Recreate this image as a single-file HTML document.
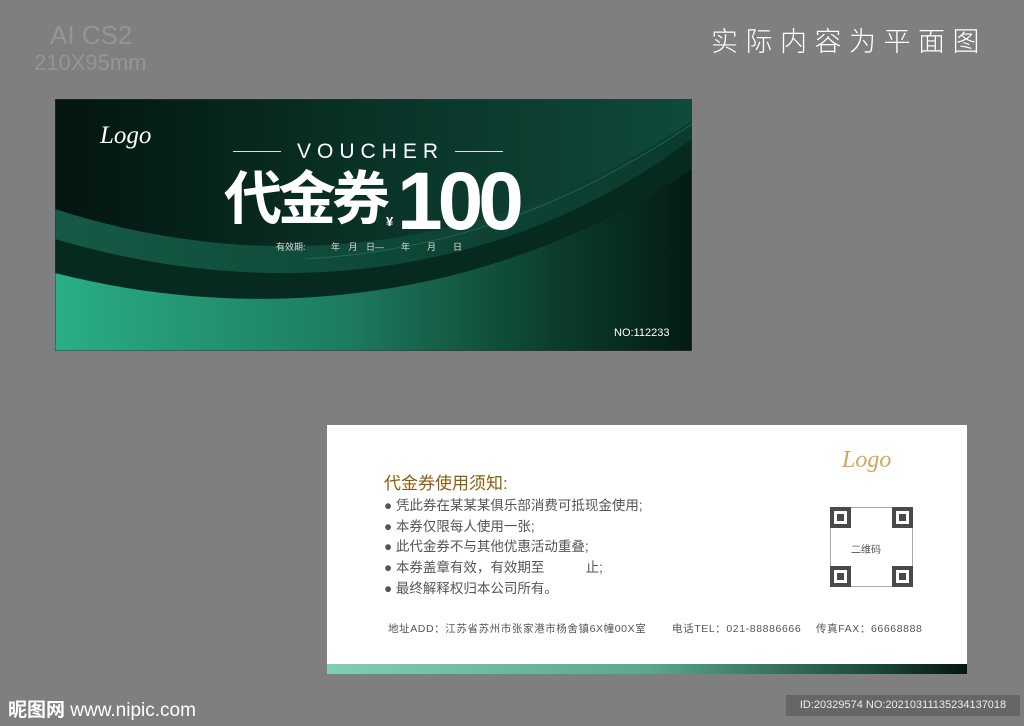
<!DOCTYPE html>
<html><head><meta charset="utf-8"><style>
*{margin:0;padding:0;box-sizing:border-box}
body{width:1024px;height:726px;background:#7f7f7f;position:relative;overflow:hidden;font-family:"Liberation Sans","Noto Sans CJK SC",sans-serif}
.abs{position:absolute;white-space:nowrap}
.qc{position:absolute;width:21px;height:21px;background:#4a4a4a;padding:4px}
.qc div{width:13px;height:13px;background:#fff;padding:3px}
.qc div div{width:7px;height:7px;background:#4a4a4a}
.li{position:absolute;left:384px;font-size:13.5px;color:#555}
</style></head><body>
<div class="abs" style="left:50px;top:20px;font-size:26px;color:#959595;font-weight:300">AI CS2</div>
<div class="abs" style="left:34px;top:50px;font-size:22px;color:#959595">210X95mm</div>
<div class="abs" style="left:711px;top:20px;font-size:27px;color:#fff;letter-spacing:7.5px;font-weight:300">实际内容为平面图</div>

<svg class="abs" style="left:55px;top:99px" width="637" height="252" viewBox="0 0 637 252">
<defs>
<linearGradient id="bg" x1="0" x2="1"><stop offset="0" stop-color="#03150f"/><stop offset="0.5" stop-color="#0a3328"/><stop offset="1" stop-color="#0f4a3a"/></linearGradient>
<linearGradient id="g1" x1="0" x2="1"><stop offset="0" stop-color="#2aae86"/><stop offset="0.45" stop-color="#1d7c60"/><stop offset="0.8" stop-color="#0b3a2c"/><stop offset="1" stop-color="#041b14"/></linearGradient>
<linearGradient id="g2" x1="0" x2="1"><stop offset="0" stop-color="#155a46"/><stop offset="0.6" stop-color="#0e4536"/><stop offset="1" stop-color="#0b3a2e"/></linearGradient>
</defs>
<rect width="637" height="252" fill="url(#bg)"/>
<path d="M0 110 C200 175 430 160 637 22 L637 252 L0 252Z" fill="url(#g2)"/>
<path d="M0 140 C220 205 450 180 637 40 L637 252 L0 252Z" fill="#062a20"/>
<path d="M0 174 C220 230 450 195 637 70 L637 252 L0 252Z" fill="url(#g1)"/>
<path d="M0 205 C220 250 450 215 637 105 L637 252 L0 252Z" fill="url(#g1)" opacity="0.5"/>
<path d="M250 160 C420 150 540 90 637 25" stroke="#2d8a6c" stroke-width="1" fill="none" opacity="0.5"/>
<rect x="0" y="0" width="637" height="252" fill="none" stroke="#333" stroke-width="1"/>
</svg>
<div class="abs" style="left:100px;top:122px;font-family:'Liberation Serif',serif;font-style:italic;font-size:25px;color:#fff">Logo</div>
<div class="abs" style="left:233px;top:151px;width:48px;height:1px;background:#ddd"></div>
<div class="abs" style="left:455px;top:151px;width:48px;height:1px;background:#ddd"></div>
<div class="abs" style="left:297px;top:140px;font-size:21px;color:#fff;letter-spacing:6px">VOUCHER</div>
<div class="abs" style="left:224px;top:162px;font-size:58px;font-weight:bold;color:#fff;line-height:76px;letter-spacing:-4px">代金券</div>
<div class="abs" style="left:386px;top:214px;font-size:13px;color:#fff;font-weight:bold">¥</div>
<div class="abs" style="left:397px;top:156px;font-size:82px;font-weight:bold;color:#fff;letter-spacing:-5px;line-height:92px">100</div>
<div class="abs" style="left:276px;top:240px;font-size:9px;color:#ddd;word-spacing:6px">有效期: &nbsp; 年 月 日— &nbsp;年 &nbsp;月 &nbsp;日</div>
<div class="abs" style="left:614px;top:327px;font-size:11px;color:#fff">NO:112233</div>

<div class="abs" style="left:327px;top:425px;width:640px;height:249px;background:#fff"></div>
<div class="abs" style="left:327px;top:664px;width:640px;height:10px;background:linear-gradient(90deg,#7ecfb3,#5aa88f 50%,#1c4a3c 85%,#061510)"></div>
<div class="abs" style="left:384px;top:469px;font-size:17px;color:#8a5e10">代金券使用须知:</div>
<div class="li" style="top:494px">● 凭此券在某某某俱乐部消费可抵现金使用;</div>
<div class="li" style="top:515px">● 本券仅限每人使用一张;</div>
<div class="li" style="top:535px">● 此代金券不与其他优惠活动重叠;</div>
<div class="li" style="top:556px">● 本券盖章有效，有效期至 &nbsp; &nbsp; &nbsp; &nbsp; &nbsp; 止;</div>
<div class="li" style="top:577px">● 最终解释权归本公司所有。</div>
<div class="abs" style="left:842px;top:447px;font-family:'Liberation Serif',serif;font-style:italic;font-size:24px;color:#d1a55e">Logo</div>
<div class="abs" style="left:830px;top:507px;width:83px;height:80px;border:1px solid #aaa"></div>
<div class="qc" style="left:830px;top:507px"><div><div></div></div></div>
<div class="qc" style="left:892px;top:507px"><div><div></div></div></div>
<div class="qc" style="left:830px;top:566px"><div><div></div></div></div>
<div class="qc" style="left:892px;top:566px"><div><div></div></div></div>
<div class="abs" style="left:851px;top:541px;font-size:10px;color:#555">二维码</div>
<div class="abs" style="left:388px;top:621px;font-size:10.5px;color:#555;letter-spacing:0.6px">地址ADD：江苏省苏州市张家港市杨舍镇6X幢00X室</div>
<div class="abs" style="left:672px;top:621px;font-size:10.5px;color:#555;letter-spacing:0.6px">电话TEL：021-88886666</div>
<div class="abs" style="left:816px;top:621px;font-size:10.5px;color:#555;letter-spacing:0.6px">传真FAX：66668888</div>

<div class="abs" style="left:8px;top:695px;font-size:19px;color:#fff;font-weight:bold">昵图网 <span style="font-weight:normal">www.nipic.com</span></div>
<div class="abs" style="left:786px;top:695px;width:234px;height:21px;background:#666;color:#eee;font-size:11px;line-height:21px;text-align:center">ID:20329574 NO:20210311135234137018</div>
</body></html>
